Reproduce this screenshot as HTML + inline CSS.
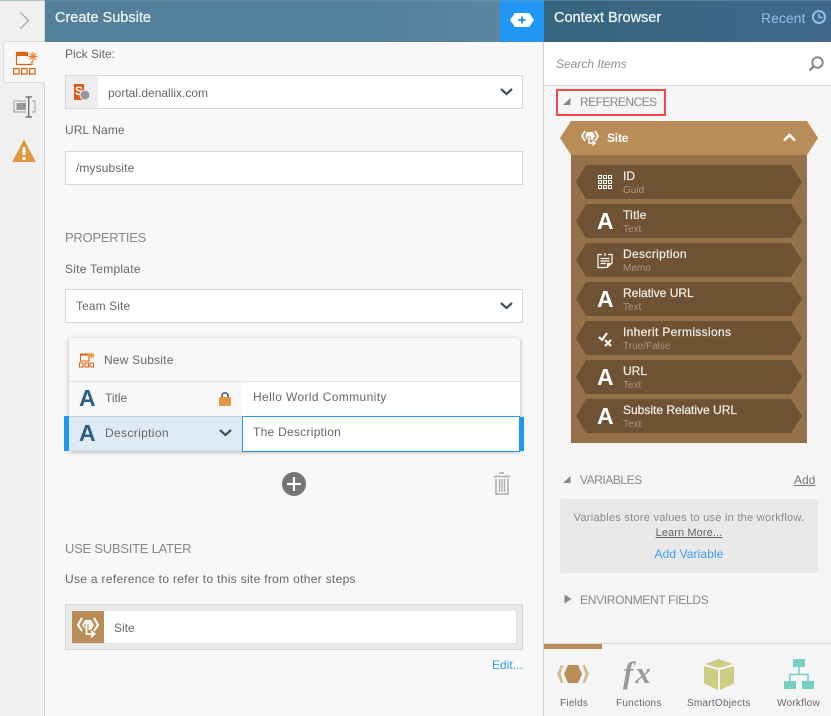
<!DOCTYPE html>
<html><head><meta charset="utf-8">
<style>
html,body{margin:0;padding:0}
body{width:831px;height:716px;overflow:hidden;position:relative;background:#f8f8f8;font-family:"Liberation Sans",sans-serif;font-size:12px;color:#666}
.a{position:absolute}
.t{position:absolute;white-space:nowrap;line-height:16px}
.box{position:absolute;background:#fff;border:1px solid #d6d6d6;box-sizing:border-box}
svg{position:absolute;overflow:visible}
.h{color:#888;font-size:12px;letter-spacing:-.3px}
.hh{color:#888;font-size:13px;letter-spacing:-.25px}
.hd{color:#eef4f7;font-size:14.5px;-webkit-text-stroke:.25px #eef4f7}
.row{position:absolute;left:576px;width:226px;height:34px;background:#6f5233;clip-path:polygon(10px 0,215px 0,226px 50%,215px 100%,10px 100%,0 50%)}
.rt{position:absolute;left:623px;color:#f4f0ea;font-size:12px;white-space:nowrap;line-height:14px;-webkit-text-stroke:.2px #f4f0ea}
.rs{position:absolute;left:623px;color:#a8957f;font-size:10px;white-space:nowrap;line-height:12px}
.A{position:absolute;font-weight:bold;font-size:23px;line-height:24px;color:#fff;font-family:"Liberation Sans",sans-serif}
.tab{position:absolute;top:698px;font-size:10px;color:#666;line-height:12px;white-space:nowrap;text-align:center;letter-spacing:.25px}
</style></head><body>

<div class="a" style="left:0;top:0;width:44px;height:716px;background:#f0f0f0;border-right:1px solid #d4d4d4"></div>
<div class="a" style="left:45px;top:0;width:455px;height:42px;background:linear-gradient(90deg,#527f99,#527f99 70%,#5b87a0)"></div>
<div class="a" style="left:500px;top:0;width:44px;height:42px;background:#2196f3"></div>
<div class="a" style="left:544px;top:0;width:287px;height:42px;background:linear-gradient(90deg,#36667f,#41688a)"></div>
<div class="a" style="left:0;top:0;width:831px;height:1px;background:#6f95aa;opacity:.5"></div>

<svg style="left:0;top:0" width="44" height="42"><path d="M20.5 12.5 L28.5 20.5 L20.5 28.5" fill="none" stroke="#aaa" stroke-width="1.3"/></svg>
<div class="t hd" style="left:55px;top:10px">Create Subsite</div>
<svg style="left:510px;top:13px" width="24" height="14"><path d="M5 0H19L24 7L19 14H5L0 7Z" fill="#fff"/><path d="M12 3.5V10.5M8.5 7H15.5" stroke="#2196f3" stroke-width="2"/></svg>
<div class="t hd" style="left:554px;top:10px">Context Browser</div>
<div class="t" style="left:761px;top:10px;color:#8fc0ea;font-size:14px">Recent</div>
<svg style="left:812px;top:10px" width="14" height="14"><circle cx="7" cy="7" r="6" fill="none" stroke="#8fc0ea" stroke-width="2"/><path d="M7 3.5V7.5H10.5" fill="none" stroke="#8fc0ea" stroke-width="1.5"/></svg>

<!-- active tab -->
<div class="a" style="left:3px;top:41px;width:42px;height:42px;background:#f8f8f8;border:1px solid #dcdcdc;border-right:none;border-radius:3px 0 0 3px;box-sizing:border-box"></div>
<svg style="left:13px;top:51px" width="25" height="25"><path d="M3.5 1.500H19V13.500H3.5Z" fill="none" stroke="#e0620d" stroke-width="1.200"/><rect x="3" y="1" width="13" height="4" fill="#e0620d"/><rect x="15" y="0" width="10" height="10" fill="#f8f8f8"/><path d="M24.500 5.500H15.500M20 1V10M16.800 2.300L23.200 8.700M23.200 2.300L16.800 8.700" stroke="#f0831f" stroke-width="1.200"/><rect x="0.600" y="17.600" width="5.500" height="5.500" fill="none" stroke="#e0620d" stroke-width="1.200"/><rect x="8.600" y="17.600" width="5.500" height="5.500" fill="none" stroke="#e0620d" stroke-width="1.200"/><rect x="16.600" y="17.600" width="5.500" height="5.500" fill="none" stroke="#e0620d" stroke-width="1.200"/></svg>
<svg style="left:13px;top:96px" width="24" height="22"><rect x="1" y="5" width="21" height="11" fill="none" stroke="#aaa" stroke-width="1.2"/><rect x="3.500" y="7" width="10" height="7" fill="#999"/><rect x="13" y="1" width="6" height="20" fill="#f0f0f0"/><path d="M12.500 1H19M15.700 1V21M12.500 21H19" stroke="#5c6670" stroke-width="1.300" fill="none"/></svg>
<svg style="left:13px;top:140px" width="22" height="22"><path d="M11 0.500L22 21.500H0Z" fill="#e0993f" stroke="#e0993f" stroke-linejoin="round" stroke-width="1"/><path d="M11 7V15M11 17V20" stroke="#fff" stroke-width="3"/></svg>

<!-- left form -->
<div class="t" style="left:65px;top:46px">Pick Site:</div>
<div class="box" style="left:65px;top:75px;width:458px;height:34px"></div>
<div class="a" style="left:66px;top:76px;width:32px;height:32px;background:#eee"></div>
<svg style="left:74px;top:84px" width="17" height="18"><rect width="10" height="16" fill="#dc5a14"/><text x="1" y="11" fill="#fff" font-size="12" font-weight="bold" font-family="Liberation Sans">S</text><circle cx="11" cy="11" r="5" fill="#999" stroke="#eee"/></svg>
<div class="t" style="left:108px;top:85px">portal.denallix.com</div>
<svg style="left:500px;top:88px" width="13" height="8"><path d="M1 1L6.500 6L12 1" fill="none" stroke="#444f5a" stroke-width="2.200"/></svg>
<div class="t" style="left:65px;top:122px;letter-spacing:.1px">URL Name</div>
<div class="box" style="left:65px;top:151px;width:458px;height:34px"></div>
<div class="t" style="left:76px;top:160px;letter-spacing:.1px">/mysubsite</div>

<div class="t hh" style="left:65px;top:230px">PROPERTIES</div>
<div class="t" style="left:65px;top:261px;letter-spacing:.25px">Site Template</div>
<div class="box" style="left:65px;top:289px;width:458px;height:34px"></div>
<div class="t" style="left:76px;top:298px;letter-spacing:.1px">Team Site</div>
<svg style="left:500px;top:302px" width="13" height="8"><path d="M1 1L6.500 6L12 1" fill="none" stroke="#444f5a" stroke-width="2.200"/></svg>

<!-- table card -->
<div class="a" style="left:69px;top:338px;width:451px;height:113px;background:#f8f8f8;border-radius:3px 3px 0 0;box-shadow:0 1px 5px rgba(0,0,0,.3)"></div>
<svg style="left:79px;top:352px" width="16" height="16"><path d="M1.500 2H10V9H1.500Z" fill="none" stroke="#e0620d"/><rect x="1" y="1.500" width="8" height="2" fill="#e0620d"/><path d="M15.500 3.500H10M12.700 .5V6.500M10.500 1.500L15 5.500M15 1.500L10.500 5.500" stroke="#f0931f" stroke-width=".9"/><rect x="0.500" y="11" width="3.500" height="4" fill="none" stroke="#e0620d"/><rect x="6" y="11" width="3.500" height="4" fill="none" stroke="#e0620d"/><rect x="11" y="11" width="3.500" height="4" fill="none" stroke="#e0620d"/></svg>
<div class="t" style="left:104px;top:352px;letter-spacing:.2px">New Subsite</div>
<div class="a" style="left:69px;top:381px;width:451px;height:1px;background:#e4e4e4"></div>
<div class="a" style="left:242px;top:382px;width:278px;height:34px;background:#fff"></div>
<div class="A" style="left:79px;top:386px;color:#2f5f80">A</div>
<div class="t" style="left:105px;top:390px">Title</div>
<svg style="left:219px;top:391px" width="12" height="16"><path d="M3 7V4.500C3 1 9 1 9 4.500V7" fill="none" stroke="#444f5a" stroke-width="1.500"/><rect y="6" width="12" height="9" rx="1" fill="#e0993f"/></svg>
<div class="t" style="left:253px;top:389px;letter-spacing:.38px">Hello World Community</div>
<div class="a" style="left:64px;top:416px;width:5px;height:35px;background:#2196f3"></div>
<div class="a" style="left:520px;top:417px;width:4px;height:34px;background:#2196f3"></div>
<div class="a" style="left:69px;top:416px;width:173px;height:35px;background:#deebf6;border-top:1px solid #c8d0d8;box-sizing:border-box"></div>
<div class="box" style="left:242px;top:416px;width:278px;height:36px;border:1px solid #2196f3"></div>
<div class="A" style="left:79px;top:421px;color:#2f5f80">A</div>
<div class="t" style="left:105px;top:425px;letter-spacing:.35px">Description</div>
<svg style="left:219px;top:429px" width="13" height="8"><path d="M1 1L6.500 6L12 1" fill="none" stroke="#444f5a" stroke-width="2.200"/></svg>
<div class="t" style="left:253px;top:424px;letter-spacing:.27px">The Description</div>

<svg style="left:282px;top:472px" width="24" height="24"><circle cx="12" cy="12" r="12" fill="#757575"/><path d="M12 5V19M5 12H19" stroke="#fff" stroke-width="2.200"/></svg>
<svg style="left:493px;top:472px" width="18" height="24"><path d="M6 1H11M1 4.500H17" stroke="#aaa" stroke-width="1.500"/><path d="M3 6.500V22H15V6.500" fill="none" stroke="#aaa" stroke-width="1.500"/><path d="M6.500 7V20M9 7V20M11.500 7V20" stroke="#aaa" stroke-width="1.300"/></svg>

<div class="t hh" style="left:65px;top:541px">USE SUBSITE LATER</div>
<div class="t" style="left:65px;top:571px;letter-spacing:.31px">Use a reference to refer to this site from other steps</div>
<div class="a" style="left:65px;top:604px;width:458px;height:46px;background:#e9e9e9;border:1px solid #d6d6d6;box-sizing:border-box"></div>
<div class="a" style="left:72px;top:611px;width:445px;height:33px;background:#fff;border-bottom:1px solid #ddd;border-right:1px solid #ddd;box-sizing:border-box"></div>
<div class="a" style="left:72px;top:611px;width:32px;height:32px;background:#b88d58"></div>
<svg style="left:76px;top:617px" width="24" height="22"><path d="M6 1L2 8L6 14M18 1L22 8L18 14" fill="none" stroke="#fff" stroke-width="2"/><path d="M9 3H15L18 8L15 13H9L6 8Z" fill="#fff" opacity=".9"/><path d="M10.500 7V17H17" fill="none" stroke="#b88d58" stroke-width="4"/><path d="M10.500 7V17H17M15 14L18.500 17L15 20" fill="none" stroke="#fff" stroke-width="1.800"/></svg>
<div class="t" style="left:114px;top:620px">Site</div>
<div class="t" style="left:492px;top:657px;color:#3a9bee">Edit...</div>

<!-- right panel -->
<div class="a" style="left:543px;top:42px;width:288px;height:674px;background:#f5f5f5;border-left:1px solid #d4d4d4;box-sizing:border-box"></div>
<div class="a" style="left:544px;top:42px;width:287px;height:44px;background:#fff;border-bottom:1px solid #d8d8d8;box-sizing:border-box"></div>
<div class="t" style="left:556px;top:56px;font-style:italic;color:#8f8f8f">Search Items</div>
<svg style="left:808px;top:56px" width="17" height="17"><circle cx="9.500" cy="6.500" r="5.200" fill="none" stroke="#888" stroke-width="2"/><path d="M5.500 10.500L1.500 14.500" stroke="#888" stroke-width="2.400"/></svg>

<div class="a" style="left:556px;top:89px;width:110px;height:27px;border:2px solid #f04848;box-sizing:border-box"></div>
<svg style="left:563px;top:98px" width="9" height="8"><path d="M7.500 0V7H0Z" fill="#888"/></svg>
<div class="t h" style="left:580px;top:94px;letter-spacing:-.55px;font-size:12px">REFERENCES</div>

<div class="a" style="left:560px;top:121px;width:258px;height:34px;background:#b88d58;clip-path:polygon(11px 0,247px 0,258px 50%,247px 100%,11px 100%,0 50%)"></div>
<svg style="left:581px;top:130px" width="18" height="17"><path d="M4 1L1 6L4 11M14 1L17 6L14 11" fill="none" stroke="#fff" stroke-width="1.700"/><path d="M6 2H12L14 6L12 10H6L4 6Z" fill="#fff"/><path d="M8 6V13H13" fill="none" stroke="#b88d58" stroke-width="3.500"/><path d="M8 6V13H13M11.500 11L14 13L11.500 15.500" fill="none" stroke="#fff" stroke-width="1.400"/></svg>
<div class="t" style="left:607px;top:130px;color:#fff;font-weight:bold;font-size:12px;letter-spacing:-.2px">Site</div>
<svg style="left:783px;top:133px" width="13" height="9"><path d="M1 7.500L6.500 2L12 7.500" fill="none" stroke="#fff" stroke-width="2.500"/></svg>
<div class="a" style="left:571px;top:155px;width:236px;height:288px;background:#94714a"></div>

<div class="row" style="top:165px"></div>
<div class="row" style="top:204px"></div>
<div class="row" style="top:243px"></div>
<div class="row" style="top:282px"></div>
<div class="row" style="top:321px"></div>
<div class="row" style="top:360px"></div>
<div class="row" style="top:399px"></div>

<svg style="left:598px;top:175px" width="14" height="14"><g fill="none" stroke="#fff"><rect x=".5" y=".5" width="3" height="3"/><rect x="5.500" y=".5" width="3" height="3"/><rect x="10.500" y=".5" width="3" height="3"/><rect x=".5" y="5.500" width="3" height="3"/><rect x="5.500" y="5.500" width="3" height="3"/><rect x="10.500" y="5.500" width="3" height="3"/><rect x=".5" y="10.500" width="3" height="3"/><rect x="5.500" y="10.500" width="3" height="3"/><rect x="10.500" y="10.500" width="3" height="3"/></g></svg>
<div class="rt" style="top:169px">ID</div><div class="rs" style="top:185px">Guid</div>
<div class="A" style="left:597px;top:209px">A</div>
<div class="rt" style="top:208px;letter-spacing:.3px">Title</div><div class="rs" style="top:224px">Text</div>
<svg style="left:597px;top:252px" width="16" height="17"><path d="M5 2.500H1V15.500H10L15 11V2.500H11" fill="none" stroke="#fff" stroke-width="1.200"/><path d="M8 1V4M3.500 6.500H12.500M3.500 9H12.500M3.500 11.500H9" stroke="#fff" stroke-width="1.200"/><path d="M10 15.500V11H15Z" fill="#fff"/></svg>
<div class="rt" style="top:247px;letter-spacing:.35px">Description</div><div class="rs" style="top:263px">Memo</div>
<div class="A" style="left:597px;top:287px">A</div>
<div class="rt" style="top:286px">Relative URL</div><div class="rs" style="top:302px">Text</div>
<svg style="left:598px;top:331px" width="16" height="16"><path d="M1 6L4 9L9 2" fill="none" stroke="#fff" stroke-width="2"/><path d="M7 9L13 15M13 9L7 15" stroke="#fff" stroke-width="2"/></svg>
<div class="rt" style="top:325px;letter-spacing:.33px">Inherit Permissions</div><div class="rs" style="top:341px">True/False</div>
<div class="A" style="left:597px;top:365px">A</div>
<div class="rt" style="top:364px">URL</div><div class="rs" style="top:380px">Text</div>
<div class="A" style="left:597px;top:404px">A</div>
<div class="rt" style="top:403px">Subsite Relative URL</div><div class="rs" style="top:419px">Text</div>

<svg style="left:563px;top:476px" width="9" height="8"><path d="M7.500 0V7H0Z" fill="#888"/></svg>
<div class="t h" style="left:580px;top:472px;letter-spacing:-.45px">VARIABLES</div>
<div class="t" style="left:794px;top:472px;color:#777;text-decoration:underline">Add</div>
<div class="a" style="left:560px;top:499px;width:258px;height:74px;background:#e9e9e9;border-radius:2px"></div>
<div class="a" style="left:560px;top:510px;width:258px;text-align:center;font-size:11px;color:#8a8a8a;line-height:16px;letter-spacing:.26px">Variables store values to use in the workflow.</div>
<div class="a" style="left:560px;top:525px;width:258px;text-align:center;font-size:11px;color:#666;line-height:16px;text-decoration:underline;letter-spacing:.1px">Learn More...</div>
<div class="a" style="left:560px;top:546px;width:258px;text-align:center;font-size:12px;color:#3a9bee;line-height:16px;letter-spacing:.1px">Add Variable</div>
<svg style="left:564px;top:594px" width="8" height="10"><path d="M0.500 0.500L7.500 5L0.500 9.500Z" fill="#888"/></svg>
<div class="t h" style="left:580px;top:592px">ENVIRONMENT FIELDS</div>

<!-- bottom tabs -->
<div class="a" style="left:544px;top:643px;width:287px;height:1px;background:#d6d6d6"></div>
<div class="a" style="left:544px;top:644px;width:58px;height:5px;background:#b88d58"></div>
<svg style="left:557px;top:665px" width="32" height="18"><path d="M4 0H6.500L3.500 9L6.500 18H4L0 9Z" fill="#d6b98f"/><path d="M28 0H25.500L28.500 9L25.500 18H28L32 9Z" fill="#d6b98f"/><path d="M11 0H21L25 9L21 18H11L7 9Z" fill="#b88d58"/></svg>
<div class="t" style="left:623px;top:657px;font-family:'Liberation Serif',serif;font-style:italic;font-weight:bold;font-size:31px;line-height:32px;letter-spacing:2px;color:#999">fx</div>
<svg style="left:704px;top:659px" width="30" height="31"><path d="M15 0L29 5L15 9L1 5Z" fill="#cfcc84"/><path d="M0 7L14 11V31L3 26L0 24Z" fill="#cfcc84"/><path d="M30 7L16 11V31L27 26L30 24Z" fill="#cfcc84"/></svg>
<svg style="left:784px;top:659px" width="30" height="30"><rect x="9" y="0" width="12" height="8" fill="#78cfc4"/><rect x="0" y="22" width="12" height="8" fill="#78cfc4"/><rect x="18" y="22" width="12" height="8" fill="#78cfc4"/><path d="M15 8V15M6 22V15.500H24V22" fill="none" stroke="#78cfc4" stroke-width="1.500"/></svg>
<div class="tab" style="left:560px">Fields</div>
<div class="tab" style="left:616px">Functions</div>
<div class="tab" style="left:687px">SmartObjects</div>
<div class="tab" style="left:777px">Workflow</div>
</body></html>
